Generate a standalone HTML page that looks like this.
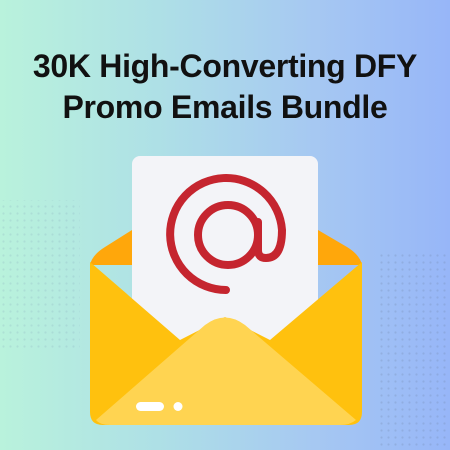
<!DOCTYPE html>
<html><head><style>
body{margin:0;width:450px;height:450px;overflow:hidden;background:linear-gradient(90deg,#b9f2dc 0%,#aee0e6 35%,#a6c8f2 70%,#97b6f8 100%);font-family:"Liberation Sans",sans-serif;position:relative}
.t{position:absolute;left:0;width:450px;text-align:center;font-weight:bold;font-size:32px;color:#111;letter-spacing:-0.3px;line-height:36px}
</style></head><body>
<svg width="450" height="450" style="position:absolute;left:0;top:0">
<defs><pattern id="d" width="7" height="7" patternUnits="userSpaceOnUse"><circle cx="3.5" cy="3.5" r="1.1" fill="#6f86a8" opacity=".45"/></pattern></defs>
<rect x="380" y="250" width="70" height="200" fill="url(#d)" opacity=".6"/>
<rect x="0" y="200" width="80" height="150" fill="url(#d)" opacity=".35"/>
<path d="M90 265 Q92 255 105 247 L132 230 L318 230 L347 247 Q360 255 362 265 Z" fill="#ffa70b"/>
<rect x="132" y="156" width="186" height="200" rx="8" fill="#f3f4f8"/>
<circle cx="228" cy="235" r="30" fill="none" stroke="#c5252f" stroke-width="8"/>
<path d="M258 222 L258 250 Q258 258 266 258 Q282 258 282 230 A56 56 0 1 0 226 290" fill="none" stroke="#c5252f" stroke-width="8" stroke-linecap="round"/>
<path d="M90 262 L180 340 L225 317 L270 340 L362 262 L362 412 Q362 425 349 425 L103 425 Q90 425 90 412 Z" fill="#ffc10e"/>
<path d="M96 420 L205 325 Q225 310 245 325 L356 420 Q350 425 340 425 L110 425 Q100 425 96 420 Z" fill="#ffd451"/>
<rect x="136" y="402" width="28" height="9" rx="4.5" fill="#fff"/>
<circle cx="178" cy="406.5" r="4.5" fill="#fff"/>
</svg>
<div class="t" style="top:48px">30K High-Converting DFY</div>
<div class="t" style="top:89px">Promo Emails Bundle</div>
</body></html>
